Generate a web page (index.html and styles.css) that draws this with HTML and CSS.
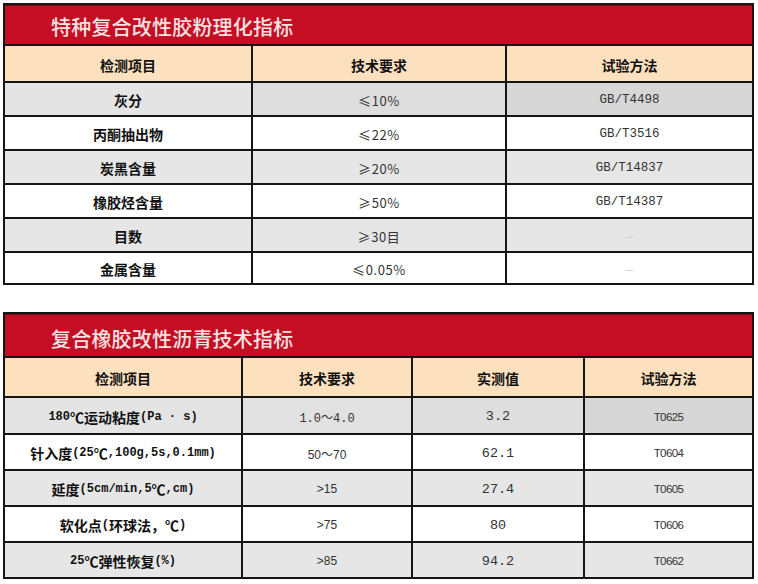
FILE: index.html
```html
<!DOCTYPE html>
<html lang="zh-CN">
<head>
<meta charset="utf-8">
<title>指标</title>
<link rel="stylesheet" href="styles.css">
</head>
<body>
<div class="page">
  <div class="sheet sheet-a">
    <div class="title">特种复合改性胶粉理化指标</div>
    <div class="cell head">检测项目</div>
    <div class="cell head">技术要求</div>
    <div class="cell head">试验方法</div>

    <div class="cell lbl g1">灰分</div>
    <div class="cell req g2">≤10%</div>
    <div class="cell std g3">GB/T4498</div>

    <div class="cell lbl">丙酮抽出物</div>
    <div class="cell req">≤22%</div>
    <div class="cell std">GB/T3516</div>

    <div class="cell lbl gr">炭黑含量</div>
    <div class="cell req gr">≥20%</div>
    <div class="cell std gr">GB/T14837</div>

    <div class="cell lbl">橡胶烃含量</div>
    <div class="cell req">≥50%</div>
    <div class="cell std">GB/T14387</div>

    <div class="cell lbl gr">目数</div>
    <div class="cell req gr">≥30目</div>
    <div class="cell dash gr">—</div>

    <div class="cell lbl">金属含量</div>
    <div class="cell req">≤0.05%</div>
    <div class="cell dash">—</div>
  </div>

  <div class="sheet sheet-b">
    <div class="title">复合橡胶改性沥青技术指标</div>
    <div class="cell head">检测项目</div>
    <div class="cell head">技术要求</div>
    <div class="cell head">实测值</div>
    <div class="cell head">试验方法</div>

    <div class="cell lbl g1"><span class="a">180</span>℃运动粘度<span class="a">(Pa · s)</span></div>
    <div class="cell mono g1b">1.0～4.0</div>
    <div class="cell val g2">3.2</div>
    <div class="cell tno g3">T0625</div>

    <div class="cell lbl">针入度<span class="a">(25</span>℃<span class="a">,100g,5s,0.1mm)</span></div>
    <div class="cell sans">50～70</div>
    <div class="cell val">62.1</div>
    <div class="cell tno">T0604</div>

    <div class="cell lbl gr">延度<span class="a">(5cm/min,5</span>℃<span class="a">,cm)</span></div>
    <div class="cell sans gr">&gt;15</div>
    <div class="cell val gr">27.4</div>
    <div class="cell tno gr">T0605</div>

    <div class="cell lbl">软化点<span class="a">(</span>环球法，℃<span class="a">)</span></div>
    <div class="cell sans">&gt;75</div>
    <div class="cell val">80</div>
    <div class="cell tno">T0606</div>

    <div class="cell lbl gr"><span class="a">25</span>℃弹性恢复<span class="a">(%)</span></div>
    <div class="cell sans gr">&gt;85</div>
    <div class="cell val gr">94.2</div>
    <div class="cell tno gr">T0662</div>
  </div>
</div>
</body>
</html>
```

FILE: styles.css
```css
html, body {
  margin: 0;
  padding: 0;
  background: #ffffff;
}

.page {
  padding: 3px 0 0 3px;
  font-family: "Noto Sans CJK SC", "Liberation Sans", sans-serif;
  color: #111;
}

.sheet {
  display: grid;
  gap: 2px;
  padding: 2px;
  background: #151515;
  width: 747px;
}

.sheet-a {
  grid-template-columns: 246px 252px 245px;
  grid-template-rows: 39px 35px 32px 32px 32px 32px 32px 30px;
}

.sheet-b {
  margin-top: 27px;
  grid-template-columns: 236px 168px 170px 167px;
  grid-template-rows: 42px 38px 35px 34px 34px 34px 34px;
}

.title {
  grid-column: 1 / -1;
  background: #c40e24;
  color: #f7e2e2;
  font-size: 20px;
  font-weight: 500;
  display: flex;
  align-items: center;
  padding: 3px 0 0 46px;
  letter-spacing: 0.2px;
  box-shadow: inset 0 1px 0 #7a0a14;
}

.sheet-b .title {
  padding-top: 6px;
}

.cell {
  background: #ffffff;
  display: flex;
  align-items: center;
  justify-content: center;
  padding-top: 2px;
  white-space: nowrap;
}

.head {
  background: #fde1bf;
  font-size: 14px;
  font-weight: 700;
  color: #111;
}

.lbl {
  font-size: 14px;
  font-weight: 700;
  color: #111;
}

.lbl .a {
  font-family: "Liberation Mono", monospace;
  font-size: 12px;
  font-weight: 700;
}

.req {
  font-size: 13px;
  letter-spacing: 0.6px;
  color: #333;
}

.std {
  font-family: "Liberation Mono", monospace;
  font-size: 12.5px;
  color: #333;
}

.dash {
  font-family: "Liberation Sans", sans-serif;
  font-size: 8px;
  color: #bdbdbd;
}

.mono {
  font-family: "Liberation Mono", "Noto Sans CJK SC", monospace;
  font-size: 12px;
  color: #333;
}

.sans {
  font-family: "Liberation Sans", "Noto Sans CJK SC", sans-serif;
  font-size: 12px;
  color: #333;
}

.val {
  font-family: "Liberation Mono", monospace;
  font-size: 13.5px;
  color: #333;
}

.tno {
  font-family: "Liberation Sans", sans-serif;
  font-size: 11.5px;
  letter-spacing: -0.6px;
  color: #333;
}

.gr { background: #e6e6e6; }
.g1 { background: #e4e4e4; }
.g1b { background: #e1e1e1; }
.g2 { background: #dedede; }
.g3 { background: #d7d7d7; }
```
